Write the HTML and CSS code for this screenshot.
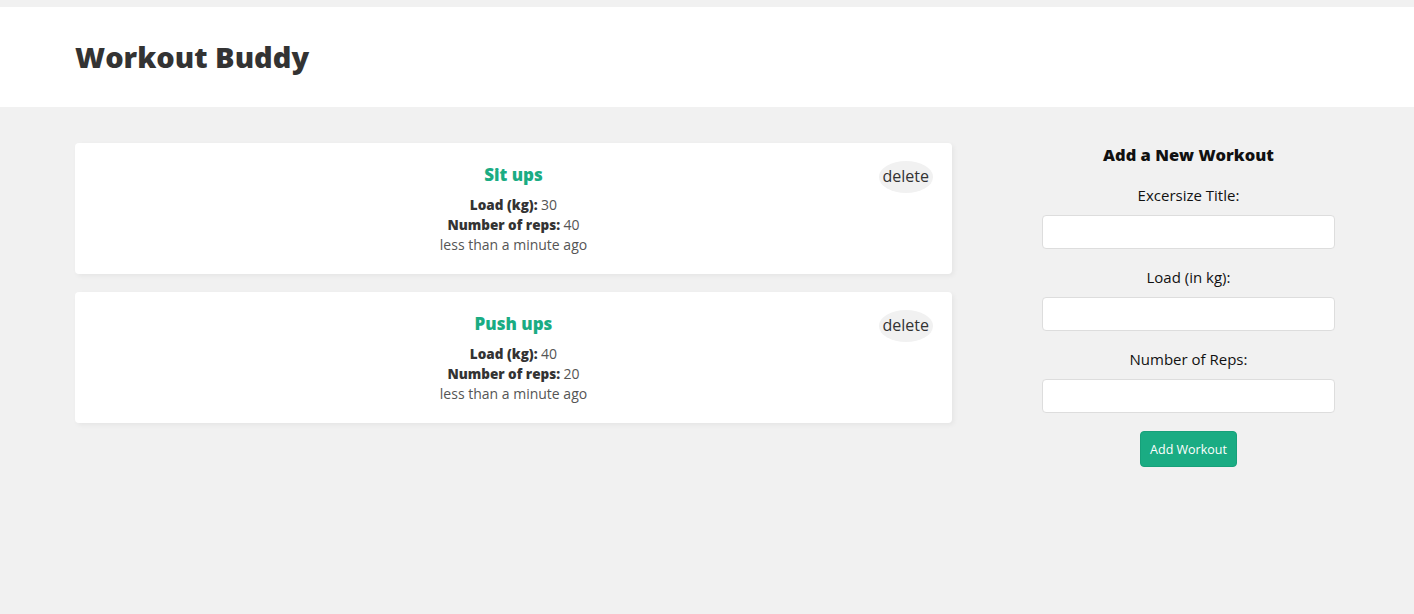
FILE: index.html
```html
<!DOCTYPE html>
<html lang="en">
<head>
<meta charset="utf-8">
<title>Workout Buddy</title>
<link rel="stylesheet" href="styles.css">
</head>
<body>
<header class="site-header">
  <div class="header-inner">
    <a class="brand" href="#">Workout Buddy</a>
  </div>
</header>
<main class="pages">
  <section class="workouts">
    <div class="workout-details">
      <h4 class="workout-title">Sit ups</h4>
      <p class="line"><strong>Load (kg): </strong>30</p>
      <p class="line"><strong>Number of reps: </strong>40</p>
      <p class="line">less than a minute ago</p>
      <span class="delete">delete</span>
    </div>
    <div class="workout-details">
      <h4 class="workout-title">Push ups</h4>
      <p class="line"><strong>Load (kg): </strong>40</p>
      <p class="line"><strong>Number of reps: </strong>20</p>
      <p class="line">less than a minute ago</p>
      <span class="delete">delete</span>
    </div>
  </section>
  <form class="create">
    <h3 class="form-title">Add a New Workout</h3>
    <label class="field-label">Excersize Title:</label>
    <input class="field-input" type="text">
    <label class="field-label">Load (in kg):</label>
    <input class="field-input" type="number">
    <label class="field-label">Number of Reps:</label>
    <input class="field-input" type="number">
    <button class="submit" type="button">Add Workout</button>
  </form>
</main>
</body>
</html>
```
FILE: styles.css
```css
* { box-sizing: border-box; }

body {
  margin: 0;
  padding-top: 7px;
  background: #f1f1f1;
  font-family: "Open Sans", "Noto Sans", sans-serif;
  min-height: 614px;
}

.site-header {
  background: #fff;
  height: 100px;
  display: flex;
  align-items: center;
}

.header-inner {
  padding-left: 75px;
}

.brand {
  color: #333;
  text-decoration: none;
  font-size: 29px;
  font-weight: 800;
  line-height: 40px;
}

.pages {
  display: grid;
  grid-template-columns: 1fr 293px;
  gap: 90px;
  padding: 36px 79px 20px 75px;
}

.workouts {
  display: flex;
  flex-direction: column;
  gap: 18px;
}

.workout-details {
  position: relative;
  background: #fff;
  border-radius: 4px;
  padding: 21px 20px 19px;
  text-align: center;
  box-shadow: 2px 2px 5px rgba(0, 0, 0, 0.05);
}

.workout-title {
  margin: 0 0 9px;
  font-size: 17px;
  line-height: 22px;
  font-weight: 800;
  color: #1aac83;
}

.line {
  margin: 0;
  font-size: 14px;
  line-height: 20px;
  color: #555;
}

.line strong {
  color: #333;
  font-weight: 800;
  font-size: 13.5px;
}

.delete {
  position: absolute;
  top: 18px;
  right: 19px;
  padding: 5px 4px 7px;
  font-size: 16px;
  line-height: 20px;
  border-radius: 50%;
  background: #f1f1f1;
  color: #333;
}

.create {
  display: flex;
  flex-direction: column;
  align-items: center;
}

.form-title {
  margin: 0 0 18px;
  font-size: 16.5px;
  line-height: 24px;
  font-weight: 800;
  color: #111;
}

.field-label {
  display: block;
  font-size: 15px;
  line-height: 20px;
  color: #111;
}

.field-input {
  display: block;
  width: 100%;
  height: 34px;
  margin: 10px 0 18px;
  padding: 10px;
  border: 1px solid #ddd;
  border-radius: 4px;
  background: #fff;
}

.submit {
  height: 36px;
  padding: 0 9px;
  background: #1aac83;
  border: 1px solid #17a07a;
  border-radius: 4px;
  color: #fff;
  font-family: inherit;
  font-size: 12.5px;
}
```
